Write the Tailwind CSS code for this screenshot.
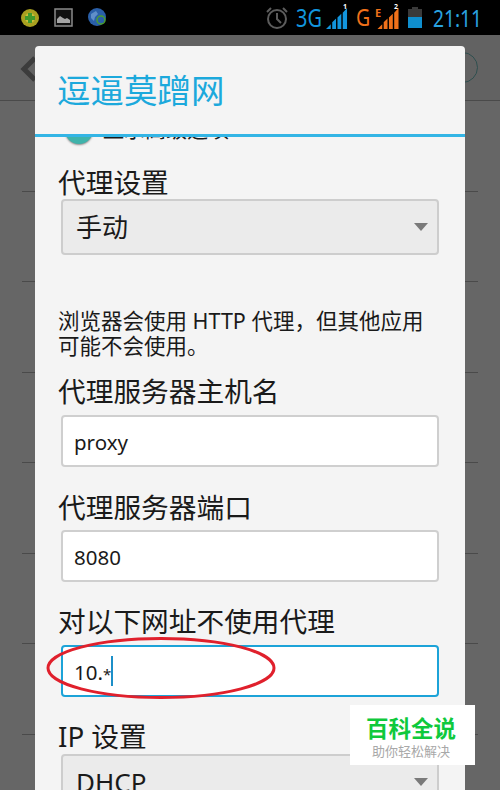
<!DOCTYPE html>
<html>
  <head>
    <meta charset="utf-8" />
    <title>逗逼莫蹭网</title>
    <script src="https://cdn.jsdelivr.net/npm/@tailwindcss/browser@4"></script>
  </head>
  <body class="bg-[#626262]">
    <div class="relative w-[500px] h-[790px] overflow-hidden font-['Noto_Sans','Noto_Sans_CJK_SC',sans-serif]">
      <!-- status bar -->
      <div class="h-[35px] bg-black flex items-center pl-[21px]">
        <svg class="w-[18px] h-[18px]" viewBox="0 0 18 18">
          <circle cx="9" cy="9" r="9" fill="#a8a020" />
          <circle cx="9" cy="9" r="5" fill="#c9c23a" />
          <path d="M7 4h4v3h3v4h-3v3H7v-3H4V7h3z" fill="#3f9a2c" />
        </svg>
        <svg class="w-[19px] h-[19px] ml-[15px]" viewBox="0 0 19 19">
          <rect x="1" y="1" width="17" height="17" fill="#111" stroke="#8a8a8a" stroke-width="1.5" />
          <path d="M3 15V11l3-3 3 2 2 1 2-1 3 2v3z" fill="#a5a5a5" />
        </svg>
        <svg class="w-[19px] h-[19px] ml-[15px]" viewBox="0 0 19 19">
          <circle cx="9" cy="9" r="9" fill="#2a5fa8" />
          <path d="M3 6l5-3 2 3-3 3-1 4-3-3z" fill="#5f8fc8" />
          <circle cx="13" cy="12" r="4" fill="none" stroke="#4ca02c" stroke-width="1.5" />
        </svg>
        <svg class="w-[24px] h-[24px] ml-[158px]" viewBox="0 0 24 24" fill="none" stroke="#5c5c5c" stroke-width="2">
          <circle cx="12" cy="13" r="9" />
          <path d="M12 7v6l4 4M2 6l4-4M22 6l-4-4" />
        </svg>
        <span class="ml-[7px] w-[26px] text-[#1295dd] text-[25px] leading-none scale-x-[0.8] origin-left">3G</span>
        <div class="relative ml-[4px] w-[22px] h-[22px]">
          <svg class="w-[22px] h-[22px]" viewBox="0 0 23 23">
            <path d="M0 23l5-5v5zM6.500 23v-7l4-4v11zM12 23V11l4-4v16zM17.500 23V6L22 1v22z" fill="#1295dd" />
          </svg>
          <span class="absolute top-[-5px] right-[1px] text-white text-[7px] leading-[10px] font-bold">1</span>
        </div>
        <span class="ml-[8px] w-[15px] text-[#f0711a] text-[23px] leading-none scale-x-[0.85] origin-left">G</span>
        <span class="ml-[4px] w-0 -mt-[11px] text-[#f0711a] text-[11px] leading-none font-bold">E</span>
        <div class="relative ml-[2px] w-[22px] h-[22px]">
          <svg class="w-[22px] h-[22px]" viewBox="0 0 22 23">
            <path d="M0 23l5-5v5zM6.500 23v-7l4-4v11zM12 23V11l4-4v16zM17.500 23V6L22 1v22z" fill="#f0711a" />
          </svg>
          <span class="absolute top-[-5px] right-[1px] text-white text-[7px] leading-[10px] font-bold">2</span>
        </div>
        <div class="ml-[9px] w-[14px] h-[21px] flex flex-col items-center">
          <div class="w-[6px] h-[2px] bg-[#3a3a3a]"></div>
          <div class="w-[14px] h-[8px] bg-[#3a3a3a]"></div>
          <div class="w-[14px] h-[11px] bg-[#0f8fcf]"></div>
        </div>
        <span class="ml-[11px] text-[#2aa3e0] text-[24px] leading-none scale-x-[0.8] origin-left">21:11</span>
      </div>

      <!-- settings list behind the dialog -->
      <div class="h-[66px] border-b border-[#4a4a4a] relative">
        <svg class="absolute left-[20px] top-[21px] w-[16px] h-[26px]" viewBox="0 0 16 26" fill="none" stroke="#3c3c3c" stroke-width="5">
          <path d="M15 2L4 13l11 11" />
        </svg>
        <div class="absolute left-[447px] top-[17px] w-[31px] h-[31px] rounded-full border border-[#2f4f4f]"></div>
      </div>
      <div class="px-[22px] bg-[#666666] h-[689px]">
        <div class="h-[90.500px] border-b border-[#4a4a4a]"></div>
        <div class="h-[90.500px] border-b border-[#4a4a4a]"></div>
        <div class="h-[90.500px] border-b border-[#4a4a4a]"></div>
        <div class="h-[90.500px] border-b border-[#4a4a4a]"></div>
        <div class="h-[90.500px] border-b border-[#4a4a4a]"></div>
        <div class="h-[90.500px] border-b border-[#4a4a4a]"></div>
        <div class="h-[90.500px] border-b border-[#4a4a4a]"></div>
      </div>

      <!-- dialog -->
      <div class="absolute left-[35px] top-[46px] w-[430px] h-[744px] bg-[#f4f4f4] rounded-t-[4px] flex flex-col text-[#1a1a1a]">
        <div class="h-[91px] shrink-0 border-b-[3px] border-[#33b5e5] pl-[22px] pt-[22px] text-[33.500px] leading-[44px] text-[#1ca9dc]">
          逗逼莫蹭网
        </div>
        <div class="flex-1 overflow-hidden px-[23px]">
          <div class="-mt-[21px] h-[28px] flex items-start">
            <div class="w-[28px] h-[28px] ml-[7px] rounded-full bg-[#3fb3ab] shadow-[0_1px_2px_#888]"></div>
            <span class="ml-[10px] text-[21px] leading-[26px]">显示高级选项</span>
          </div>
          <div class="mt-[20px] text-[27.700px] leading-[36px] h-[36px]">代理设置</div>
          <div class="-mt-[1px] mx-[3px] h-[56px] bg-[#ebebeb] border-2 border-[#cdcdcd] rounded-[4px] relative pl-[13px] text-[26px] leading-[52px]">
            手动
            <div class="absolute right-[9px] top-[22px] w-0 h-0 border-x-[7px] border-x-transparent border-t-[8px] border-t-[#7a7a7a]"></div>
          </div>
          <div class="mt-[53px] text-[21.500px] leading-[25px]">浏览器会使用 HTTP 代理，但其他应用<br />可能不会使用。</div>
          <div class="mt-[15px] text-[27.700px] leading-[36px] h-[36px]">代理服务器主机名</div>
          <div class="mt-[6px] mx-[3px] h-[52px] bg-white border-2 border-[#cfcfcf] rounded-[4px] pl-[11px] text-[20.500px] leading-[50px]">proxy</div>
          <div class="mt-[22px] text-[27.700px] leading-[36px] h-[36px]">代理服务器端口</div>
          <div class="mt-[5px] mx-[3px] h-[52px] bg-white border-2 border-[#cfcfcf] rounded-[4px] pl-[11px] text-[20.500px] leading-[50px]">8080</div>
          <div class="mt-[21px] text-[27.700px] leading-[36px] h-[36px]">对以下网址不使用代理</div>
          <div class="mt-[6px] mx-[3px] h-[52px] bg-white border-2 border-[#1ca3d8] rounded-[4px] pl-[11px] text-[20.500px] leading-[50px] flex">
            <span>10.<span class="text-[15px]">*</span></span><span class="mt-[9px] w-[2px] h-[30px] bg-[#1c8fc8]"></span>
          </div>
          <div class="mt-[21px] text-[27.700px] leading-[36px] h-[36px]">IP 设置</div>
          <div class="mx-[3px] h-[56px] bg-[#ebebeb] border-2 border-[#cdcdcd] rounded-[4px] relative pl-[13px] text-[26px] leading-[52px]">
            DHCP
            <div class="absolute right-[9px] top-[22px] w-0 h-0 border-x-[7px] border-x-transparent border-t-[8px] border-t-[#7a7a7a]"></div>
          </div>
        </div>
      </div>

      <!-- red annotation ellipse -->
      <svg class="absolute left-[44px] top-[634px] w-[236px] h-[68px]" viewBox="0 0 236 68" fill="none">
        <ellipse cx="117" cy="34" rx="113" ry="29.500" stroke="#e0202c" stroke-width="3" />
      </svg>

      <!-- watermark -->
      <div class="absolute left-[350px] top-[705px] w-[125px] h-[60px] bg-white flex flex-col items-center pt-[11px] pr-[3px]">
        <div class="text-[22.500px] leading-[26px] font-bold text-[#0fc93c]">百科全说</div>
        <div class="mt-[1px] text-[13px] leading-[16px] text-[#a8a8a8]">助你轻松解决</div>
      </div>
    </div>
  </body>
</html>
